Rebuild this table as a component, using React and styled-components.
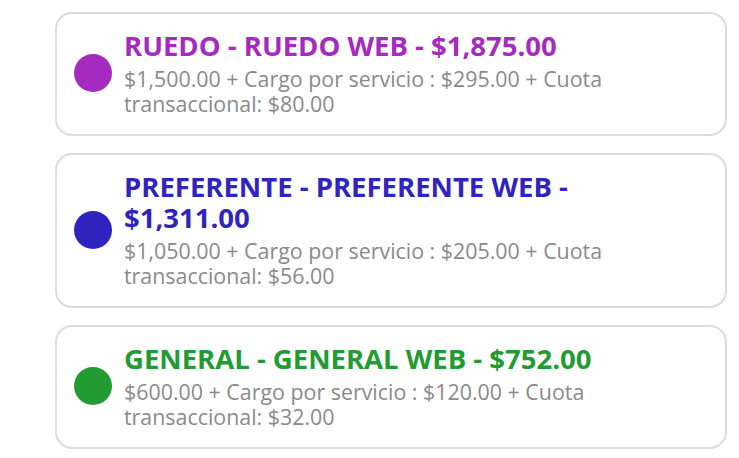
import React from 'react'
import styled, { createGlobalStyle } from 'styled-components'

const GlobalStyle = createGlobalStyle`
  body {
    margin: 0;
    background: #ffffff;
    font-family: "Open Sans", "Noto Sans", sans-serif;
  }
`

const List = styled.div`
  display: flex;
  flex-direction: column;
  gap: 17px;
  padding: 12px 12px 0 55px;
  width: 672px;
`

const Card = styled.div`
  display: flex;
  align-items: center;
  gap: 12px;
  border: 2px solid #dcdcdc;
  border-radius: 17px;
  padding: 16px 32px 18px 17px;
`

const Dot = styled.span`
  flex: none;
  width: 38px;
  height: 38px;
  border-radius: 50%;
  background: ${(p) => p.color};
`

const Info = styled.div`
  display: flex;
  flex-direction: column;
  gap: 5px;
  min-width: 0;
`

const Title = styled.div`
  font-size: 27.5px;
  line-height: 31px;
  font-weight: 700;
  color: ${(p) => p.color};
`

const Detail = styled.div`
  font-size: 21.4px;
  line-height: 25px;
  color: #8a8a8a;
`

const tickets = [
  {
    color: '#a52ac0',
    title: 'RUEDO - RUEDO WEB - $1,875.00',
    detail: '$1,500.00 + Cargo por servicio : $295.00 + Cuota transaccional: $80.00',
  },
  {
    color: '#3024c0',
    title: 'PREFERENTE - PREFERENTE WEB - $1,311.00',
    detail: '$1,050.00 + Cargo por servicio : $205.00 + Cuota transaccional: $56.00',
  },
  {
    color: '#229b32',
    title: 'GENERAL - GENERAL WEB - $752.00',
    detail: '$600.00 + Cargo por servicio : $120.00 + Cuota transaccional: $32.00',
  },
]

const App = () => {
  return (
    <>
      <GlobalStyle />
      <List>
        {tickets.map((t) => (
          <Card key={t.title}>
            <Dot color={t.color} />
            <Info>
              <Title color={t.color}>{t.title}</Title>
              <Detail>{t.detail}</Detail>
            </Info>
          </Card>
        ))}
      </List>
    </>
  )
}

export default App
